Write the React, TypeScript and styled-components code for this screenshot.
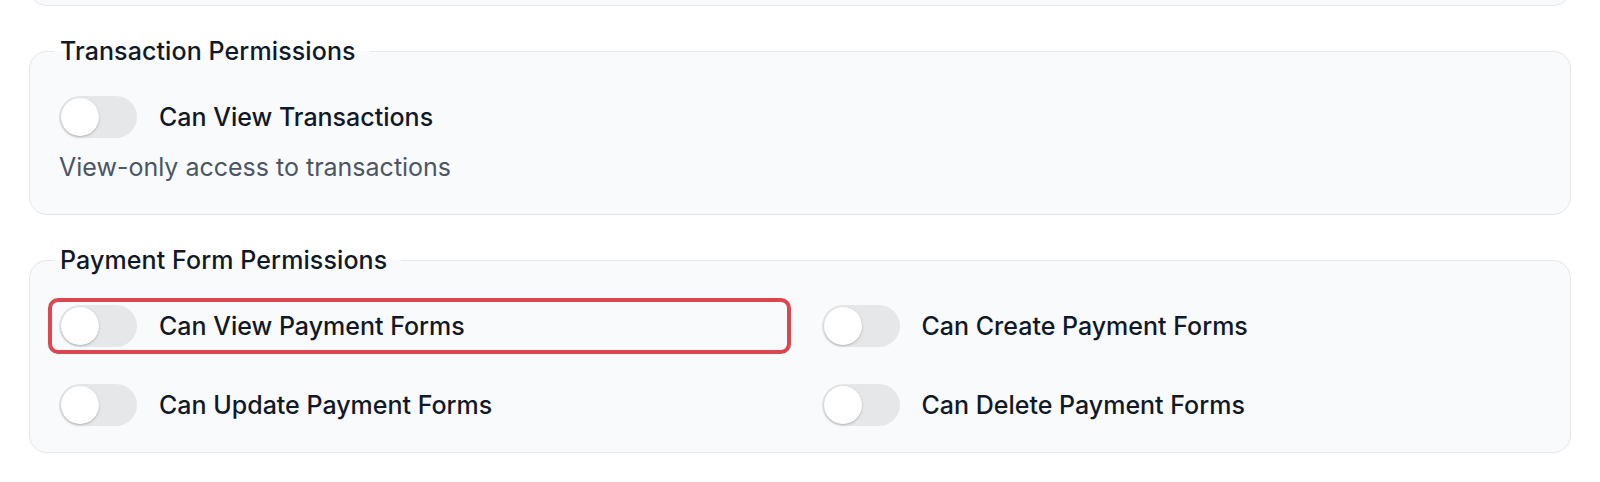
import React from "react";
import styled, { createGlobalStyle } from "styled-components";

const GlobalStyle = createGlobalStyle`
  html, body { margin: 0; padding: 0; background: #ffffff; }
  body { font-family: Inter, "Noto Sans", "Liberation Sans", sans-serif; color: #111827; }
  * { box-sizing: border-box; }
`;

const Page = styled.div`
  display: flex;
  flex-direction: column;
  padding: 0 29px;
  overflow: hidden;
  height: 482px;
`;

const PrevCard = styled.div`
  height: 60px;
  margin-top: -54px;
  flex-shrink: 0;
  border: 1px solid #e5e7eb;
  border-radius: 18px;
  background: #f9fafb;
`;

const Fieldset = styled.fieldset<{ $bottom: number }>`
  margin: 27px 0 0 0;
  padding: 27px 29px ${(p) => p.$bottom}px 29px;
  border: 1px solid #e5e7eb;
  border-radius: 18px;
  background: #f9fafb;
  min-width: 0;
`;

const Legend = styled.legend`
  margin-left: -5px;
  padding: 0 14px 0 6px;
  font-size: 25px;
  line-height: 36px;
  font-weight: 500;
  letter-spacing: 0.1px;
  color: #111827;
`;

const Grid = styled.div<{ $cols: number }>`
  display: grid;
  grid-template-columns: repeat(${(p) => p.$cols}, 1fr);
  column-gap: 43px;
  row-gap: 37px;
`;

const Cell = styled.label`
  position: relative;
  display: flex;
  align-items: center;
  gap: 22px;
  height: 42px;
  cursor: pointer;
`;

const Highlight = styled.span`
  position: absolute;
  top: -7px;
  bottom: -7px;
  left: -11px;
  right: -12px;
  border: 4px solid #dc4650;
  border-radius: 10px;
  pointer-events: none;
`;

const Track = styled.span`
  display: flex;
  align-items: center;
  width: 78px;
  height: 42px;
  padding: 2px;
  flex-shrink: 0;
  border-radius: 21px;
  background: #e6e7e9;
`;

const Thumb = styled.span`
  width: 38px;
  height: 38px;
  border-radius: 50%;
  background: #ffffff;
  box-shadow: 0 1px 3px rgba(0, 0, 0, 0.18), 0 1px 1px rgba(0, 0, 0, 0.06);
`;

const LabelText = styled.span`
  font-size: 25px;
  line-height: 36px;
  font-weight: 500;
  color: #111827;
`;

const Description = styled.p`
  margin: 11px 0 0 0;
  font-size: 25px;
  line-height: 36px;
  font-weight: 400;
  color: #4b5563;
`;

type ToggleProps = { label: string; highlighted?: boolean };

const Toggle: React.FC<ToggleProps> = ({ label, highlighted }) => (
  <Cell>
    <Track role="switch" aria-checked={false}>
      <Thumb />
    </Track>
    <LabelText>{label}</LabelText>
    {highlighted && <Highlight />}
  </Cell>
);

export default function App() {
  return (
    <>
      <GlobalStyle />
      <Page>
        <PrevCard />
        <Fieldset $bottom={29}>
          <Legend>Transaction Permissions</Legend>
          <Grid $cols={1}>
            <Toggle label="Can View Transactions" />
          </Grid>
          <Description>View-only access to transactions</Description>
        </Fieldset>
        <Fieldset $bottom={26}>
          <Legend>Payment Form Permissions</Legend>
          <Grid $cols={2}>
            <Toggle label="Can View Payment Forms" highlighted />
            <Toggle label="Can Create Payment Forms" />
            <Toggle label="Can Update Payment Forms" />
            <Toggle label="Can Delete Payment Forms" />
          </Grid>
        </Fieldset>
      </Page>
    </>
  );
}
